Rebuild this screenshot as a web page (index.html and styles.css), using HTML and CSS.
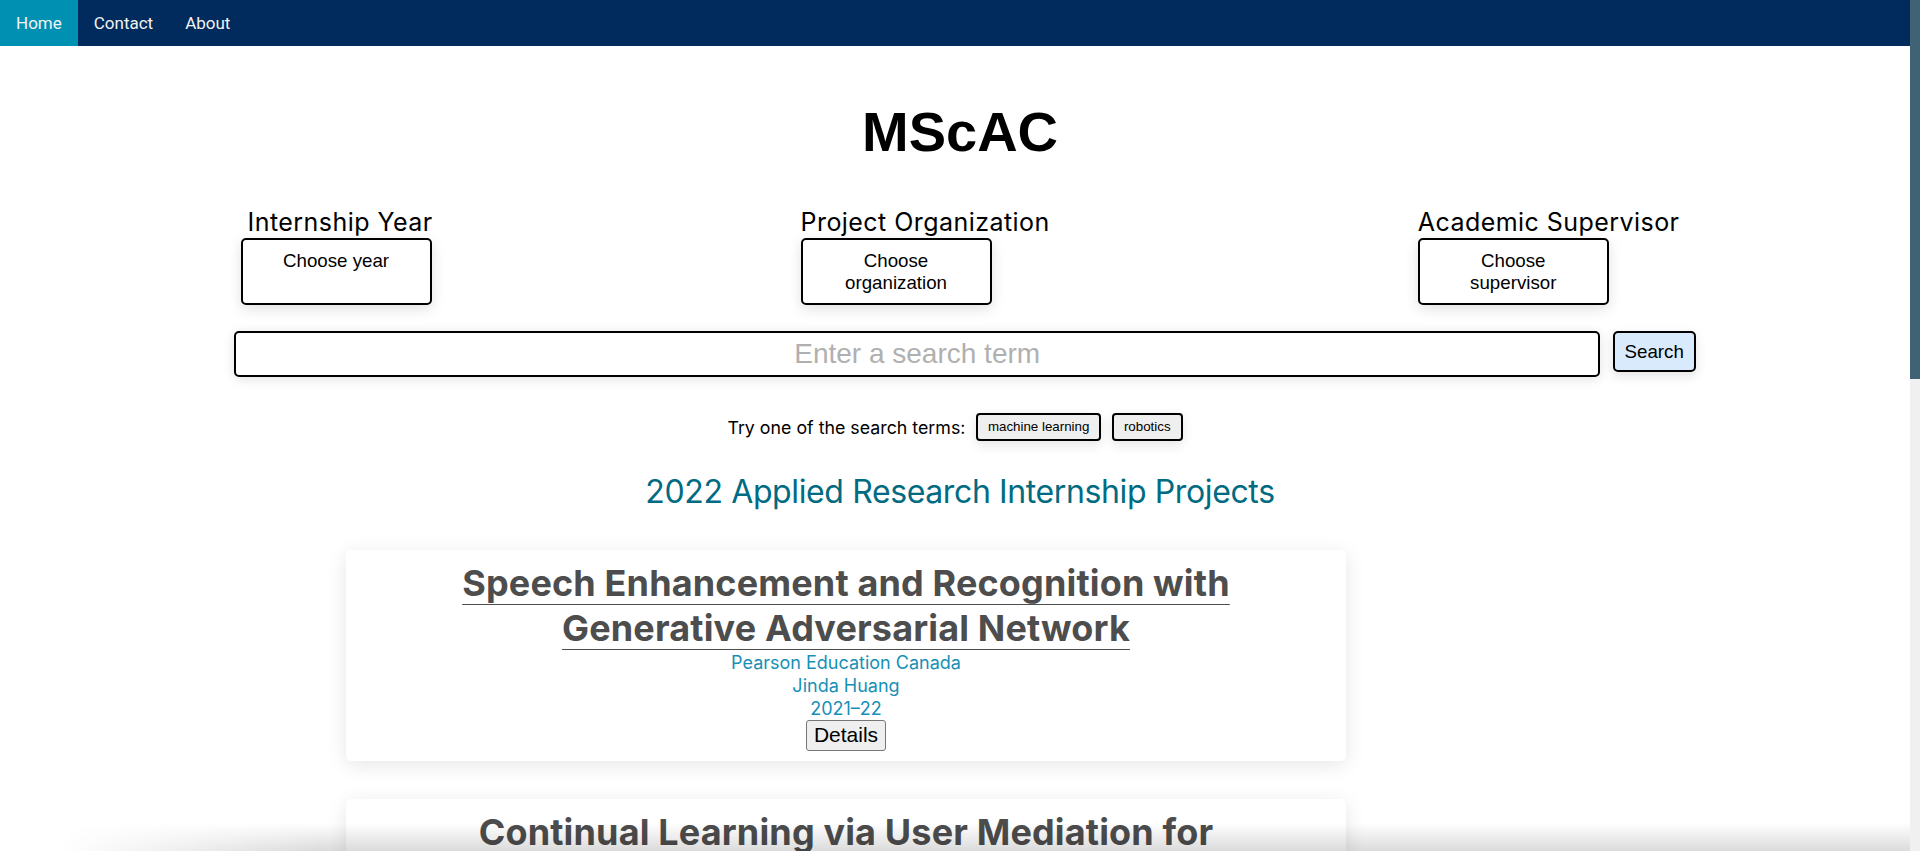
FILE: index.html
```html
<!DOCTYPE html>
<html lang="en">
<head>
<meta charset="utf-8">
<title>MScAC Projects</title>
<link rel="stylesheet" href="styles.css">
</head>
<body>
<nav class="topnav">
  <a class="nav-link active" href="#">Home</a>
  <a class="nav-link" href="#">Contact</a>
  <a class="nav-link" href="#">About</a>
</nav>

<main class="page">
  <h1 class="site-title">MScAC</h1>

  <div class="filters">
    <div class="filter">
      <h2 class="filter-label filter-label-indent">Internship Year</h2>
      <div class="select-btn">Choose year</div>
    </div>
    <div class="filter">
      <h2 class="filter-label">Project Organization</h2>
      <div class="select-btn">Choose organization</div>
    </div>
    <div class="filter">
      <h2 class="filter-label">Academic Supervisor</h2>
      <div class="select-btn">Choose supervisor</div>
    </div>
  </div>

  <form class="search-row" onsubmit="return false;">
    <input class="search-input" type="text" placeholder="Enter a search term">
    <button class="search-btn" type="submit">Search</button>
  </form>

  <div class="suggest">
    <span class="suggest-text">Try one of the search terms:</span>
    <button class="chip" type="button">machine learning</button>
    <button class="chip" type="button">robotics</button>
  </div>

  <h2 class="list-heading">2022 Applied Research Internship Projects</h2>

  <div class="cards">
    <article class="card">
      <h3 class="card-title"><a href="#">Speech Enhancement and Recognition with Generative Adversarial Network</a></h3>
      <div class="card-meta">Pearson Education Canada</div>
      <div class="card-meta">Jinda Huang</div>
      <div class="card-meta">2021–22</div>
      <button class="details-btn" type="button">Details</button>
    </article>
    <article class="card">
      <h3 class="card-title"><a href="#">Continual Learning via User Mediation for Conversational Agents</a></h3>
      <div class="card-meta">Vector Institute</div>
      <div class="card-meta">Alex Chen</div>
      <div class="card-meta">2021–22</div>
      <button class="details-btn" type="button">Details</button>
    </article>
    <article class="card">
      <h3 class="card-title"><a href="#">Anomaly Detection in Financial Transactions with Graph Neural Networks</a></h3>
      <div class="card-meta">RBC Borealis</div>
      <div class="card-meta">Maya Singh</div>
      <div class="card-meta">2021–22</div>
      <button class="details-btn" type="button">Details</button>
    </article>
    <article class="card">
      <h3 class="card-title"><a href="#">Robotic Grasping of Deformable Objects using Reinforcement Learning</a></h3>
      <div class="card-meta">Kindred AI</div>
      <div class="card-meta">Daniel Park</div>
      <div class="card-meta">2021–22</div>
      <button class="details-btn" type="button">Details</button>
    </article>
  </div>
</main>

<div class="scrollbar"><div class="scrollbar-thumb"></div></div>
<div class="bottom-shade"></div>
</body>
</html>
```

FILE: styles.css
```css
* { box-sizing: border-box; }

html { scrollbar-width: none; }
html::-webkit-scrollbar { display: none; width: 0; }

body {
  margin: 0;
  font-family: Inter, "Noto Sans", sans-serif;
  color: #000;
  background: #fff;
}

/* top navigation */
.topnav {
  display: flex;
  background: #002b5c;
}
.nav-link {
  padding: 14px 16px;
  font: 400 17px/18px Roboto, "Liberation Sans", sans-serif;
  color: #f2f2f2;
  text-decoration: none;
}
.nav-link.active { background: #0090b2; }

.page {
  display: flex;
  flex-direction: column;
  align-items: center;
}

.site-title {
  margin: 54px 0 0;
  font: 700 56px/64px "Liberation Sans", Arial, sans-serif;
}

/* filters */
.filters {
  display: flex;
  justify-content: space-between;
  width: 1439px;
  margin-top: 44px;
}
.filter {
  display: flex;
  flex-direction: column;
  align-items: flex-start;
}
.filter-label {
  margin: 0;
  font: 400 25px/29px Inter, sans-serif;
  letter-spacing: 0.45px;
}
.filter-label-indent { padding-left: 7px; }
.select-btn {
  width: 191px;
  height: 67px;
  margin-top: 1px;
  padding: 10px 18px;
  border: 2px solid #000;
  border-radius: 5px;
  background: #fff;
  box-shadow: 0 4px 14px rgba(0, 0, 0, 0.12);
  font: 400 18.72px/21.5px "Liberation Sans", Arial, sans-serif;
  text-align: center;
}

/* search */
.search-row {
  display: flex;
  align-items: flex-start;
  gap: 12.4px;
  margin-top: 26px;
  padding-left: 10px;
}
.search-input {
  width: 1366px;
  height: 45.5px;
  padding: 0 10px;
  border: 2px solid #000;
  border-radius: 5px;
  box-shadow: 0 2px 12px rgba(0, 0, 0, 0.12);
  font: 400 28px "Liberation Sans", Arial, sans-serif;
  text-align: center;
  outline: none;
}
.search-input::placeholder { color: #b0b0b0; }
.search-btn {
  height: 41px;
  padding: 0 10px;
  border: 2px solid #000;
  border-radius: 5px;
  background: #d8eafc;
  color: #000;
  box-shadow: 0 4px 12px rgba(0, 0, 0, 0.12);
  font: 400 18.72px "Liberation Sans", Arial, sans-serif;
}

/* suggestions */
.suggest {
  display: flex;
  align-items: center;
  gap: 10.5px;
  margin-top: 36px;
  padding-right: 10px;
}
.suggest-text {
  padding-top: 2px;
  font: 400 17.8px/23px Inter, sans-serif;
}
.chip {
  height: 28.4px;
  padding: 0 10px;
  border: 2px solid #000;
  border-radius: 4px;
  background: #efefef;
  color: #000;
  box-shadow: 0 4px 12px rgba(0, 0, 0, 0.1);
  font: 400 13.33px "Liberation Sans", Arial, sans-serif;
}

.list-heading {
  margin: 31px 0 0;
  font: 400 32px/40px Inter, sans-serif;
  letter-spacing: -0.38px;
  color: #006b82;
}

/* project cards */
.cards {
  display: flex;
  flex-direction: column;
  align-items: flex-start;
  gap: 38px;
  width: 1228px;
  margin-top: 38px;
  padding-bottom: 60px;
}
.card {
  width: 1000px;
  padding: 11px 20px 10px;
  border-radius: 5px;
  background: #fff;
  box-shadow: 0 4px 20px rgba(0, 0, 0, 0.1);
  text-align: center;
}
.card-title {
  margin: 0;
  font: 700 36px/45px Inter, sans-serif;
  letter-spacing: 0.15px;
}
.card-title a {
  color: #4d4d4d;
  text-decoration: underline;
  text-decoration-thickness: 1px;
  text-underline-offset: 8px;
}
.card-meta {
  font: 400 18px/23px Inter, sans-serif;
  color: #1690b5;
}
.details-btn {
  height: 30.7px;
  padding: 0 7px;
  border: 1px solid #767676;
  border-radius: 3px;
  background: #efefef;
  color: #000;
  font: 400 21px "Liberation Sans", Arial, sans-serif;
}

/* overlay scrollbar and window shade */
.scrollbar {
  position: fixed;
  top: 0;
  right: 0;
  width: 10px;
  height: 100vh;
  background: #f0f0f0;
}
.scrollbar-thumb {
  height: 379px;
  background: #3f6274;
}
.bottom-shade {
  position: fixed;
  left: 0;
  right: 10px;
  bottom: 0;
  height: 28px;
  background: linear-gradient(rgba(0, 0, 0, 0), rgba(0, 0, 0, 0.14));
  -webkit-mask-image: linear-gradient(to right, transparent 60px, #000 320px);
  mask-image: linear-gradient(to right, transparent 60px, #000 320px);
  pointer-events: none;
}
```
